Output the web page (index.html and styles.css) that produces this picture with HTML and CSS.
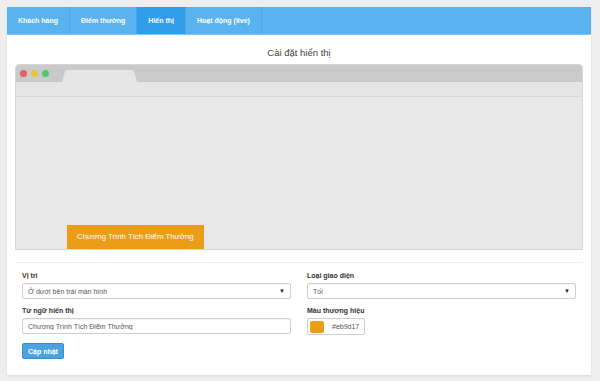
FILE: index.html
```html
<!DOCTYPE html>
<html lang="vi">
<head>
    <meta charset="UTF-8">
    <meta name="viewport" content="width=device-width, initial-scale=1.0">
    <title>Cài đặt hiển thị</title>
    <link rel="stylesheet" href="styles.css">
</head>
<body>

<div class="panel">
    <ul class="tabs">
        <li class="tab">Khách hàng</li>
        <li class="tab">Điểm thưởng</li>
        <li class="tab active">Hiển thị</li>
        <li class="tab">Hoạt động (live)</li>
    </ul>

    <div class="panel-body">
        <h2 class="title">Cài đặt hiển thị</h2>

        <!-- Preview of the widget inside a fake browser window -->
        <div class="browser">
            <div class="browser-top">
                <span class="dot red"></span>
                <span class="dot yellow"></span>
                <span class="dot green"></span>
                <svg class="browser-tab" width="76" height="12" viewBox="0 0 76 12">
                    <path d="M0 12 L3 1.5 Q3.4 0 5 0 L70 0 Q71.6 0 72 1.5 L75 12 Z" fill="#e6e6e6"/>
                </svg>
            </div>
            <div class="browser-toolbar"></div>
            <div class="browser-view">
                <div class="promo-btn" id="preview-btn">Chương Trình Tích Điểm Thưởng</div>
            </div>
        </div>

        <div class="form-grid">
            <div class="form-group">
                <label for="position">Vị trí</label>
                <div class="select">
                    <span>Ở dưới bên trái màn hình</span>
                    <span class="caret">&#9660;</span>
                </div>
            </div>
            <div class="form-group">
                <label for="theme">Loại giao diện</label>
                <div class="select">
                    <span>Tối</span>
                    <span class="caret">&#9660;</span>
                </div>
            </div>
            <div class="form-group">
                <label for="label-text">Từ ngữ hiển thị</label>
                <input type="text" id="label-text" value="Chương Trình Tích Điểm Thưởng">
            </div>
            <div class="form-group">
                <label for="brand-color">Màu thương hiệu</label>
                <div class="color-input">
                    <span class="swatch"></span>
                    <span class="color-code">#eb9d17</span>
                </div>
            </div>
        </div>

        <button class="update-btn">Cập nhật</button>
    </div>
</div>

</body>
</html>
```

FILE: styles.css
```css
body {
    background-color: #eeeeee;
    color: #333;
    font-family: 'Liberation Sans', Arial, sans-serif;
    margin: 0;
    padding: 7px 9px 7px 7px;
}

.panel {
    background-color: #fff;
    box-shadow: 0 1px 2px rgba(0, 0, 0, 0.08);
}

.tabs {
    display: flex;
    margin: 0;
    padding: 0;
    list-style: none;
    background-color: #5ab3ef;
    height: 28px;
    border-bottom: 1px solid #7fc6f4;
    box-sizing: border-box;
}

.tab {
    color: #fff;
    font-size: 7px;
    font-weight: bold;
    line-height: 27px;
    padding: 0 11px;
    border-right: 1px solid #4fa8e6;
}

.tab.active {
    background-color: #2e9ee8;
}

.panel-body {
    padding: 0 8px 16px;
}

.title {
    margin: 0;
    font-size: 9.5px;
    font-weight: normal;
    text-align: center;
    color: #444;
    height: 29px;
    line-height: 36px;
}

.browser {
    border: 1px solid #d6d6d6;
    border-radius: 4px 4px 0 0;
    overflow: hidden;
}

.browser-top {
    height: 17px;
    background-color: #cacaca;
    display: flex;
    align-items: center;
    gap: 4px;
    padding-left: 4px;
}

.dot {
    width: 7px;
    height: 7px;
    border-radius: 50%;
}

.dot.red { background-color: #e0625a; }
.dot.yellow { background-color: #e8c33e; }
.dot.green { background-color: #52c46c; }

.browser-tab {
    align-self: flex-end;
    margin-left: 9px;
}

.browser-toolbar {
    height: 14px;
    background-color: #e6e6e6;
    border-bottom: 1px solid #d9d9d9;
}

.browser-view {
    height: 152px;
    background-color: #e8e8e8;
    display: flex;
    align-items: flex-end;
    padding-left: 51px;
}

.promo-btn {
    background-color: #eb9d17;
    color: #fff;
    font-size: 7.8px;
    height: 24px;
    line-height: 24px;
    padding: 0 10px;
}

.form-grid {
    display: grid;
    grid-template-columns: 1fr 1fr;
    column-gap: 16px;
    row-gap: 8px;
    margin-top: 12px;
    border-top: 1px solid #eeeeee;
    padding: 9px 7px 0;
}

.form-group label {
    display: block;
    font-size: 7px;
    font-weight: bold;
    color: #333;
    margin-bottom: 4px;
}

.select, .form-group input[type="text"] {
    display: flex;
    justify-content: space-between;
    align-items: center;
    width: 100%;
    height: 16px;
    box-sizing: border-box;
    border: 1px solid #cfcfcf;
    border-radius: 2px;
    padding: 0 5px;
    font-family: inherit;
    font-size: 7px;
    color: #555;
    background-color: #fff;
    box-shadow: inset 0 1px 1px rgba(0, 0, 0, 0.05);
}

.caret {
    font-size: 6px;
    color: #222;
}

.color-input {
    display: flex;
    align-items: center;
    width: 58px;
    height: 17px;
    box-sizing: border-box;
    border: 1px solid #cfcfcf;
    border-radius: 2px;
    padding: 0 2px;
}

.swatch {
    width: 14px;
    height: 12px;
    border-radius: 2px;
    background-color: #eb9d17;
}

.color-code {
    font-size: 7px;
    color: #555;
    margin-left: 8px;
}

.update-btn {
    margin: 8px 0 0 7px;
    background-color: #4aa3dd;
    border: 1px solid #3a8fc8;
    border-radius: 2px;
    color: #fff;
    font-family: inherit;
    font-size: 7px;
    font-weight: bold;
    height: 16px;
    padding: 0 5px;
    cursor: pointer;
}
```
